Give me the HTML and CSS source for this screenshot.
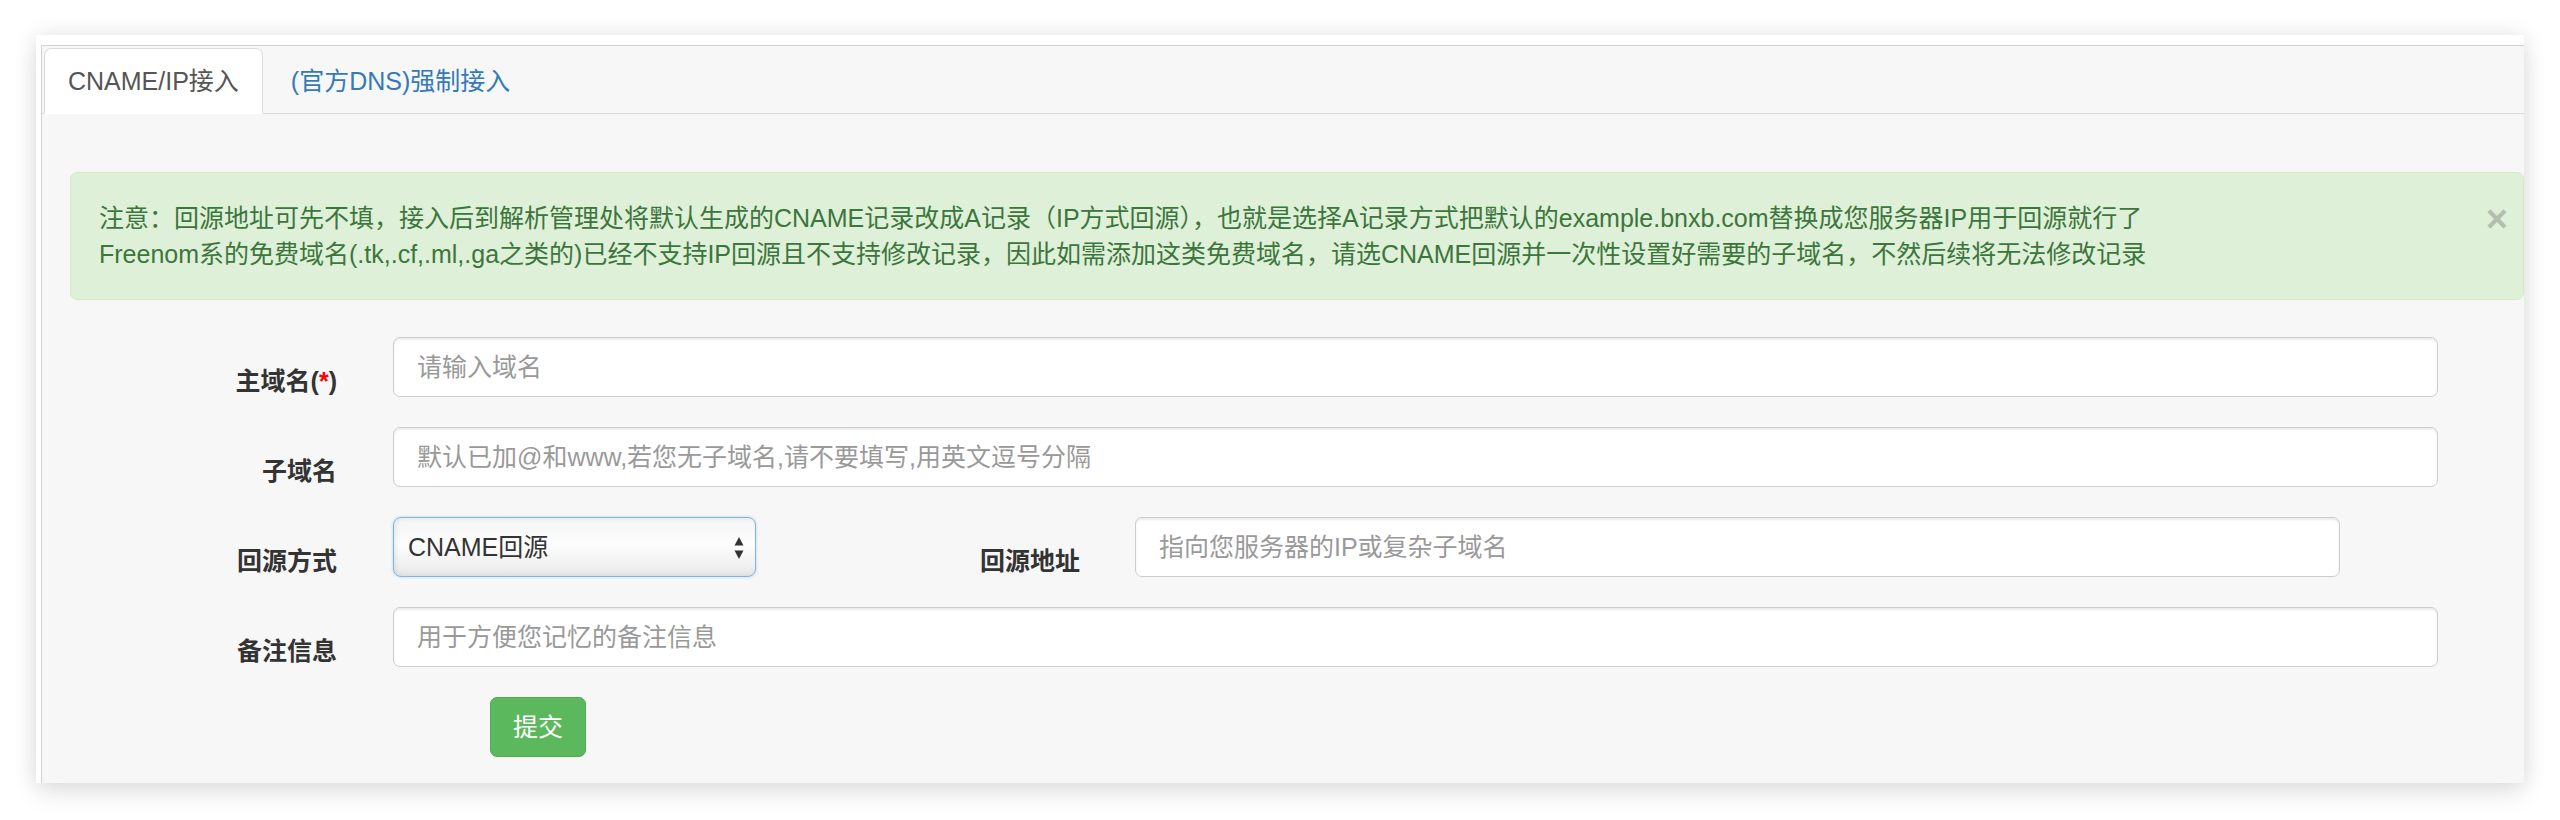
FILE: index.html
```html
<!DOCTYPE html>
<html lang="zh-CN">
<head>
    <meta charset="UTF-8">
    <title>添加域名</title>
    <link rel="stylesheet" href="styles.css">
</head>
<body>
    <div class="window">
        <div class="panel">
            <ul class="nav-tabs">
                <li class="tab active">CNAME/IP接入</li>
                <li class="tab">(官方DNS)强制接入</li>
            </ul>

            <div class="tab-content">
                <div class="alert">
                    <span class="close">&times;</span>
                    注意：回源地址可先不填，接入后到解析管理处将默认生成的CNAME记录改成A记录（IP方式回源），也就是选择A记录方式把默认的example.bnxb.com替换成您服务器IP用于回源就行了<br>
                    Freenom系的免费域名(.tk,.cf,.ml,.ga之类的)已经不支持IP回源且不支持修改记录，因此如需添加这类免费域名，请选CNAME回源并一次性设置好需要的子域名，不然后续将无法修改记录
                </div>

                <form class="form">
                    <div class="form-row">
                        <label class="control-label">主域名(<span class="req">*</span>)</label>
                        <input class="form-control" type="text" placeholder="请输入域名">
                    </div>
                    <div class="form-row">
                        <label class="control-label">子域名</label>
                        <input class="form-control" type="text" placeholder="默认已加@和www,若您无子域名,请不要填写,用英文逗号分隔">
                    </div>
                    <div class="form-row">
                        <label class="control-label">回源方式</label>
                        <div class="select-wrap">
                            <select class="select">
                                <option>CNAME回源</option>
                                <option>IP回源</option>
                            </select>
                            <svg class="select-arrows" viewBox="0 0 10 24">
                                <path d="M5 1 L9.5 9.5 L0.5 9.5 Z"/>
                                <path d="M5 23 L9.5 14.5 L0.5 14.5 Z"/>
                            </svg>
                        </div>
                        <label class="control-label label-inline">回源地址</label>
                        <input class="form-control input-short" type="text" placeholder="指向您服务器的IP或复杂子域名">
                    </div>
                    <div class="form-row">
                        <label class="control-label">备注信息</label>
                        <input class="form-control" type="text" placeholder="用于方便您记忆的备注信息">
                    </div>
                    <div class="form-actions">
                        <button class="btn-success" type="button">提交</button>
                    </div>
                </form>
            </div>
        </div>
    </div>
</body>
</html>
```

FILE: styles.css
```css
* {
    margin: 0;
    padding: 0;
    box-sizing: border-box;
}

body {
    width: 2560px;
    height: 820px;
    padding: 35px 0 0 36px;
    background: #fff;
    font-family: "Liberation Sans", "Noto Sans CJK SC", sans-serif;
    font-size: 25px;
    line-height: 36px;
    color: #333;
    overflow: hidden;
}

/* fenetre avec ombre */
.window {
    width: 2488px;
    height: 748px;
    padding: 10px 0 0 5px;
    background: #fff;
    box-shadow: 0 0 22px rgba(0,0,0,0.10), 0 12px 24px rgba(0,0,0,0.08);
    overflow: hidden;
    display: flex;
}

.panel {
    flex: 1;
    display: flex;
    flex-direction: column;
    background: #f7f7f7;
    border-top: 1px solid #d2d2d2;
    border-left: 1px solid #d2d2d2;
}

.nav-tabs {
    list-style: none;
    display: flex;
    padding: 2px 0 0 2px;
    border-bottom: 1px solid #dcdcdc;
}

.tab {
    margin-right: 4px;
    margin-bottom: -1px;
    padding: 14px 23px;
    border: 1px solid transparent;
    border-radius: 7px 7px 0 0;
    color: #337ab7;
    cursor: pointer;
}

.tab.active {
    background: #fff;
    color: #555;
    border-color: #dcdcdc;
    border-bottom-color: transparent;
}

.tab-content {
    flex: 1;
    padding-top: 58px;
}

.alert {
    position: relative;
    margin-left: 28px;
    padding: 27px 28px;
    background: #dff0d8;
    border: 1px solid #d6e9c6;
    border-radius: 7px;
    color: #3c763d;
    white-space: nowrap;
}

.close {
    position: absolute;
    top: 27px;
    right: 15px;
    font-size: 38px;
    font-weight: 700;
    line-height: 38px;
    color: #000;
    opacity: 0.2;
    text-shadow: 0 1px 0 #fff;
    cursor: pointer;
}

.form {
    padding: 37px 86px 0 28px;
}

.form-row {
    display: flex;
    align-items: flex-start;
    margin-bottom: 30px;
}

.control-label {
    width: 267px;
    height: 60px;
    margin-right: 56px;
    padding-top: 26px;
    text-align: right;
    font-weight: 700;
    color: #333;
}

.req {
    color: #f00;
}

.form-control {
    flex: 1;
    height: 60px;
    padding: 0 23px;
    font: inherit;
    color: #555;
    background: #fff;
    border: 1px solid #ccc;
    border-radius: 7px;
    box-shadow: inset 0 2px 2px rgba(0,0,0,0.075);
    outline: none;
}

.form-control::placeholder {
    color: #999;
}

.select-wrap {
    position: relative;
    width: 363px;
    height: 60px;
}

.select {
    width: 100%;
    height: 100%;
    padding: 0 14px;
    font: inherit;
    color: #333;
    -webkit-appearance: none;
    appearance: none;
    background: linear-gradient(#f4f4f4, #fdfdfd 45%, #f1f1f1 80%, #e6e6e6);
    border: 1px solid #7fb5e4;
    border-radius: 8px;
    box-shadow: inset 2px 0 4px rgba(0,0,0,0.08), 0 0 3px rgba(102,175,233,0.5);
    outline: none;
}

.select-arrows {
    position: absolute;
    top: 19px;
    right: 12px;
    width: 10px;
    height: 24px;
    fill: #333;
    pointer-events: none;
}

.label-inline {
    width: 324px;
    margin-right: 55px;
}

.input-short {
    flex: 0 0 1205px;
}

.form-actions {
    padding-left: 420px;
}

.btn-success {
    width: 96px;
    height: 60px;
    font: inherit;
    color: #fff;
    background: #5cb85c;
    border: 1px solid #4cae4c;
    border-radius: 7px;
    cursor: pointer;
}
```
